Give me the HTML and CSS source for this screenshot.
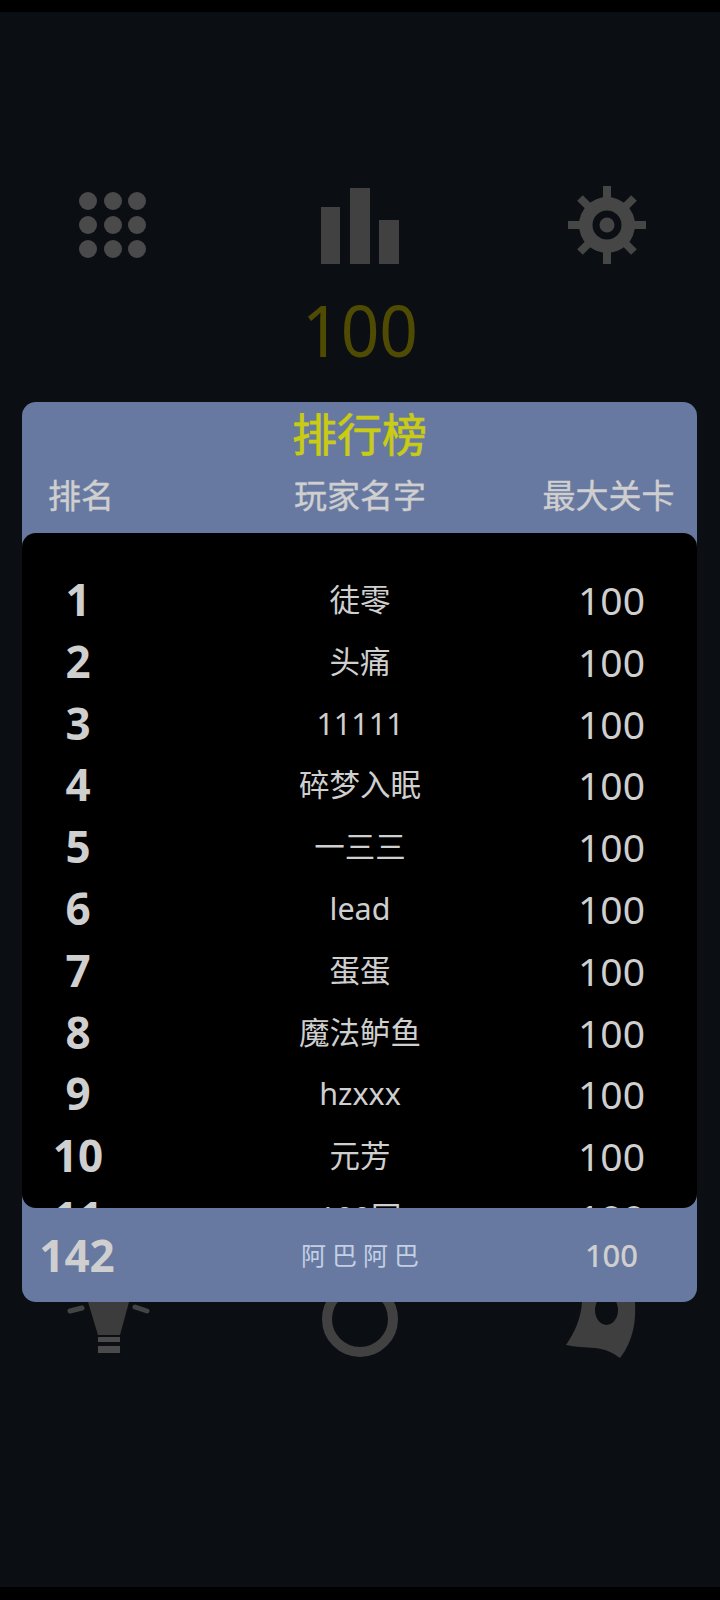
FILE: index.html
```html
<!DOCTYPE html>
<html lang="zh-CN">
<head>
  <meta charset="UTF-8" />
  <meta name="viewport" content="width=device-width, initial-scale=1" />
  <title>排行榜</title>
  <link rel="stylesheet" href="styles.css">
</head>
<body>
  <div class="edgeBar topEdge"></div>

  <main class="screen">
    <div class="iconRow">
      <svg class="icon" viewBox="0 0 80 80" aria-label="Levels">
        <g fill="#4a4a4a">
          <circle cx="15" cy="16" r="9" /><circle cx="40" cy="16" r="9" /><circle cx="64" cy="16" r="9" />
          <circle cx="15" cy="40" r="9" /><circle cx="40" cy="40" r="9" /><circle cx="64" cy="40" r="9" />
          <circle cx="15" cy="64" r="9" /><circle cx="40" cy="64" r="9" /><circle cx="64" cy="64" r="9" />
        </g>
      </svg>
      <svg class="icon" viewBox="0 0 80 80" aria-label="Ranking">
        <g fill="#414141">
          <rect x="1" y="22" width="19" height="57" />
          <rect x="30" y="3" width="20" height="76" />
          <rect x="59" y="35" width="20" height="44" />
        </g>
      </svg>
      <svg class="icon" viewBox="0 0 80 80" aria-label="Settings">
        <g stroke="#464646" stroke-width="8">
          <line x1="40" y1="1" x2="40" y2="79" />
          <line x1="1" y1="40" x2="79" y2="40" />
          <line x1="13" y1="13" x2="67" y2="67" />
          <line x1="67" y1="13" x2="13" y2="67" />
        </g>
        <circle cx="40" cy="40" r="28" fill="#464646" />
        <circle cx="40" cy="40" r="14.5" fill="#0b0f13" />
        <circle cx="40" cy="40" r="7.5" fill="#464646" />
      </svg>
    </div>

    <div class="score">100</div>

    <div class="iconRow bottomIcons">
      <svg class="icon" viewBox="0 0 80 80" aria-label="Hint">
        <path d="M15 10 H56 V22 L47 55 H25 L15 22 Z" fill="#3c3c3c" />
        <path d="M25 57 H47 V62 H25 Z M25 66 H47 V73 H25 Z" fill="#4a4a4a" />
        <path d="M-3 31 L9 28 M62 27 L74 31" stroke="#444" stroke-width="5" stroke-linecap="round" />
      </svg>
      <svg class="icon" viewBox="0 0 80 80" aria-label="Restart">
        <circle cx="40" cy="39" r="33" fill="none" stroke="#414141" stroke-width="10" />
      </svg>
      <svg class="icon" viewBox="0 0 80 80" aria-label="Skin">
        <path d="M15 10 H68 V22 C69 40 67 60 53 78 C45 72 38 69 28 68 C18 67 8 67 -1 65 C8 52 14 38 15 22 Z" fill="#3f3f3f" />
        <ellipse cx="39.5" cy="30" rx="11.5" ry="15" fill="#0b0f13" />
      </svg>
    </div>

    <section class="rankPanel">
      <h1 class="panelTitle">排行榜</h1>
      <div class="rankRow headRow">
        <span>排名</span>
        <span>玩家名字</span>
        <span class="scoreCell">最大关卡</span>
      </div>

      <div class="rankList">
        <div class="rankRow"><b>1</b><span>徒零</span><span class="scoreCell">100</span></div>
        <div class="rankRow"><b>2</b><span>头痛</span><span class="scoreCell">100</span></div>
        <div class="rankRow"><b>3</b><span>11111</span><span class="scoreCell">100</span></div>
        <div class="rankRow"><b>4</b><span>碎梦入眠</span><span class="scoreCell">100</span></div>
        <div class="rankRow"><b>5</b><span>一三三</span><span class="scoreCell">100</span></div>
        <div class="rankRow"><b>6</b><span>lead</span><span class="scoreCell">100</span></div>
        <div class="rankRow"><b>7</b><span>蛋蛋</span><span class="scoreCell">100</span></div>
        <div class="rankRow"><b>8</b><span>魔法鲈鱼</span><span class="scoreCell">100</span></div>
        <div class="rankRow"><b>9</b><span>hzxxx</span><span class="scoreCell">100</span></div>
        <div class="rankRow"><b>10</b><span>元芳</span><span class="scoreCell">100</span></div>
        <div class="rankRow"><b>11</b><span>100国</span><span class="scoreCell">100</span></div>
      </div>

      <div class="rankRow myRow">
        <b>142</b>
        <span class="myName">阿巴阿巴</span>
        <span class="scoreCell">100</span>
      </div>
    </section>
  </main>

  <div class="edgeBar bottomEdge"></div>
</body>
</html>
```

FILE: styles.css
```css
html, body {
  margin: 0;
  height: 100%;
}

body {
  display: flex;
  flex-direction: column;
  height: 1600px;
  background: black;
  font-family: "Noto Sans", "Noto Sans CJK SC", sans-serif;
  color: #cfcfcf;
}

.edgeBar {
  background: black;
  flex: none;
}

.topEdge {
  height: 12px;
}

.bottomEdge {
  height: 13px;
}

.screen {
  position: relative;
  flex: 1;
  display: flex;
  flex-direction: column;
  padding: 173px 73px 227px;
  background: #0b0f13;
}

.iconRow {
  display: flex;
  justify-content: space-between;
}

.icon {
  width: 80px;
  height: 80px;
  overflow: visible;
}

.score {
  margin-top: 28px;
  height: 72px;
  line-height: 72px;
  font-size: 72px;
  font-weight: 400;
  text-align: center;
  color: #4f4b02;
  transform: scaleX(0.94);
}

.bottomIcons {
  margin-top: auto;
}

/* dialog sits over the game screen */
.rankPanel {
  position: absolute;
  left: 22px;
  top: 390px;
  width: 675px;
  height: 900px;
  display: flex;
  flex-direction: column;
  background: #6779a1;
  border-radius: 14px;
  overflow: hidden;
}

.panelTitle {
  margin: 0;
  height: 66px;
  line-height: 66px;
  font-size: 45px;
  font-weight: 400;
  text-align: center;
  color: #c9cc12;
  -webkit-text-stroke: 0.7px #c9cc12;
}

.rankRow {
  display: grid;
  grid-template-columns: 110px 456px 109px;
  align-items: center;
  height: 61.8px;
  line-height: 61.8px;
  text-align: center;
  font-size: 30.5px;
}

.rankRow b {
  margin-left: 2px;
  font-size: 44px;
  font-weight: 700;
}

.scoreCell {
  margin-left: -62px;
  font-size: 39px;
}

.headRow {
  height: 56px;
  line-height: 56px;
  font-size: 33px;
  -webkit-text-stroke: 0.4px #cfcfcf;
}

.headRow span:first-child {
  font-size: 33px;
  margin-left: 8px;
}

.headRow .scoreCell {
  margin-left: -68px;
  font-size: 33px;
}

.rankList {
  flex: 1;
  min-height: 0;
  margin-top: 9px;
  padding-top: 36px;
  background: black;
  border-radius: 14px;
  overflow: hidden;
}

.myRow {
  flex: none;
  height: 94px;
  line-height: 94px;
}

.myRow b {
  margin-left: 0;
  font-size: 44px;
}

.myName {
  margin-left: 6px;
  font-size: 25px;
  letter-spacing: 6px;
  color: #c3cfe4;
}

.myRow .scoreCell {
  font-size: 31px;
  font-weight: 500;
}
```
